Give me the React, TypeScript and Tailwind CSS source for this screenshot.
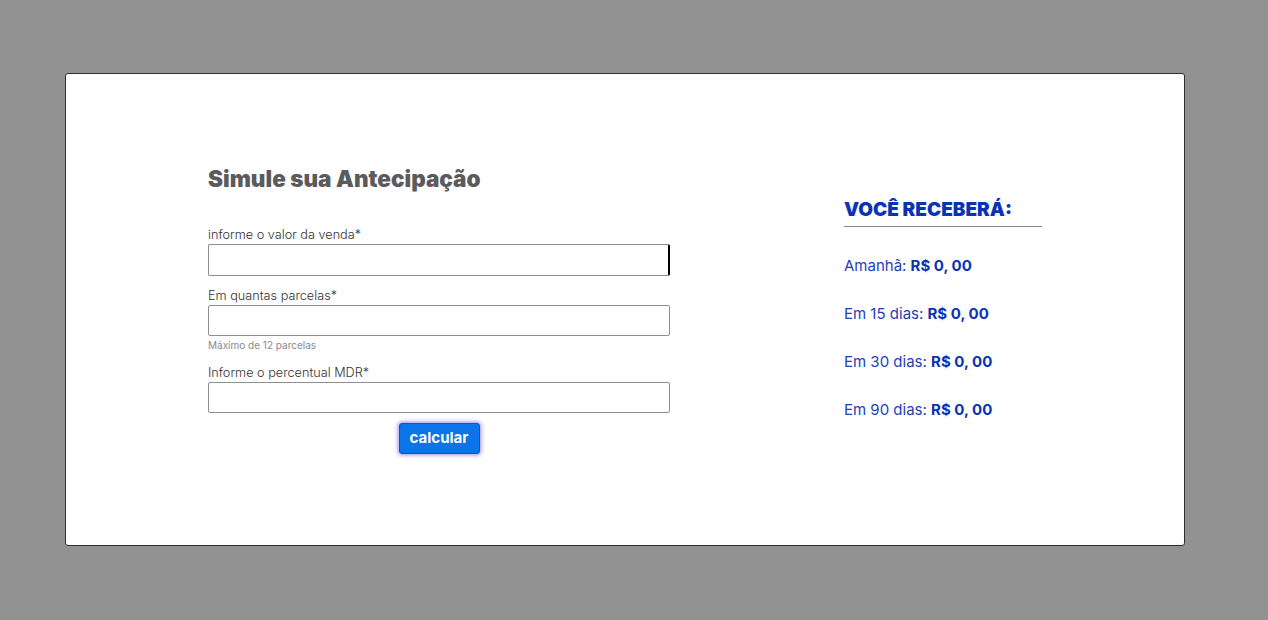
import type { FC } from "react";

const font = { fontFamily: "Inter, 'Noto Sans', sans-serif" };

interface FieldProps {
  label: string;
  hint?: string;
  focused?: boolean;
  className?: string;
}

const Field: FC<FieldProps> = ({ label, hint, focused, className }) => (
  <div className={"flex flex-col " + (className ?? "")}>
    <label className="text-[12.7px] font-light leading-[18px] text-[#333]">{label}</label>
    <input
      className={
        "w-[462px] rounded-[2px] border border-[#8f8f8f] bg-white outline-none" +
        (focused ? " h-[32px] border-r-2 border-r-black" : " h-[31px]")
      }
    />
    {hint && <span className="mt-[3px] text-[10px] leading-[13px] text-[#8a8a8a]">{hint}</span>}
  </div>
);

const rows = [
  { label: "Amanhã:", value: "R$ 0, 00" },
  { label: "Em 15 dias:", value: "R$ 0, 00" },
  { label: "Em 30 dias:", value: "R$ 0, 00" },
  { label: "Em 90 dias:", value: "R$ 0, 00" },
];

export default function App() {
  return (
    <div className="h-[620px] w-full bg-[#929292] pt-[73px] pl-[65px]" style={font}>
      <div className="flex h-[473px] w-[1120px] rounded-[3px] border border-[#2e2e2e] bg-white pl-[142px]">
        <div className="flex w-[462px] flex-col pt-[91px]">
          <h1 className="text-[22.5px] font-black leading-7 text-[#5b5b5b]">Simule sua Antecipação</h1>
          <Field className="mt-[33px]" label="informe o valor da venda*" focused />
          <Field className="mt-[11px]" label="Em quantas parcelas*" hint="Máximo de 12 parcelas" />
          <Field className="mt-[12px]" label="Informe o percentual MDR*" />
          <div className="mt-[10px] flex justify-center">
            <button className="h-[31px] w-[81px] rounded-[3px] border border-[#3b3bd6] bg-[#0a74e8] text-[15px] font-bold text-white shadow-[0_0_4px_1px_rgba(90,60,220,0.6)]">
              calcular
            </button>
          </div>
        </div>
        <div className="ml-[174px] flex flex-col pt-[124px] text-[#0a33b5]">
          <div className="w-[198px] border-b border-[#8a8a8a] pb-[4px]">
            <h2 className="text-[19px] font-black leading-6">VOCÊ RECEBERÁ:</h2>
          </div>
          <div className="mt-[29px] flex flex-col gap-[28px]">
            {rows.map((r) => (
              <p key={r.label} className="text-[15px] leading-5 text-[#1d3fb8]">
                {r.label} <span className="font-bold text-[#0a33b5]">{r.value}</span>
              </p>
            ))}
          </div>
        </div>
      </div>
    </div>
  );
}
